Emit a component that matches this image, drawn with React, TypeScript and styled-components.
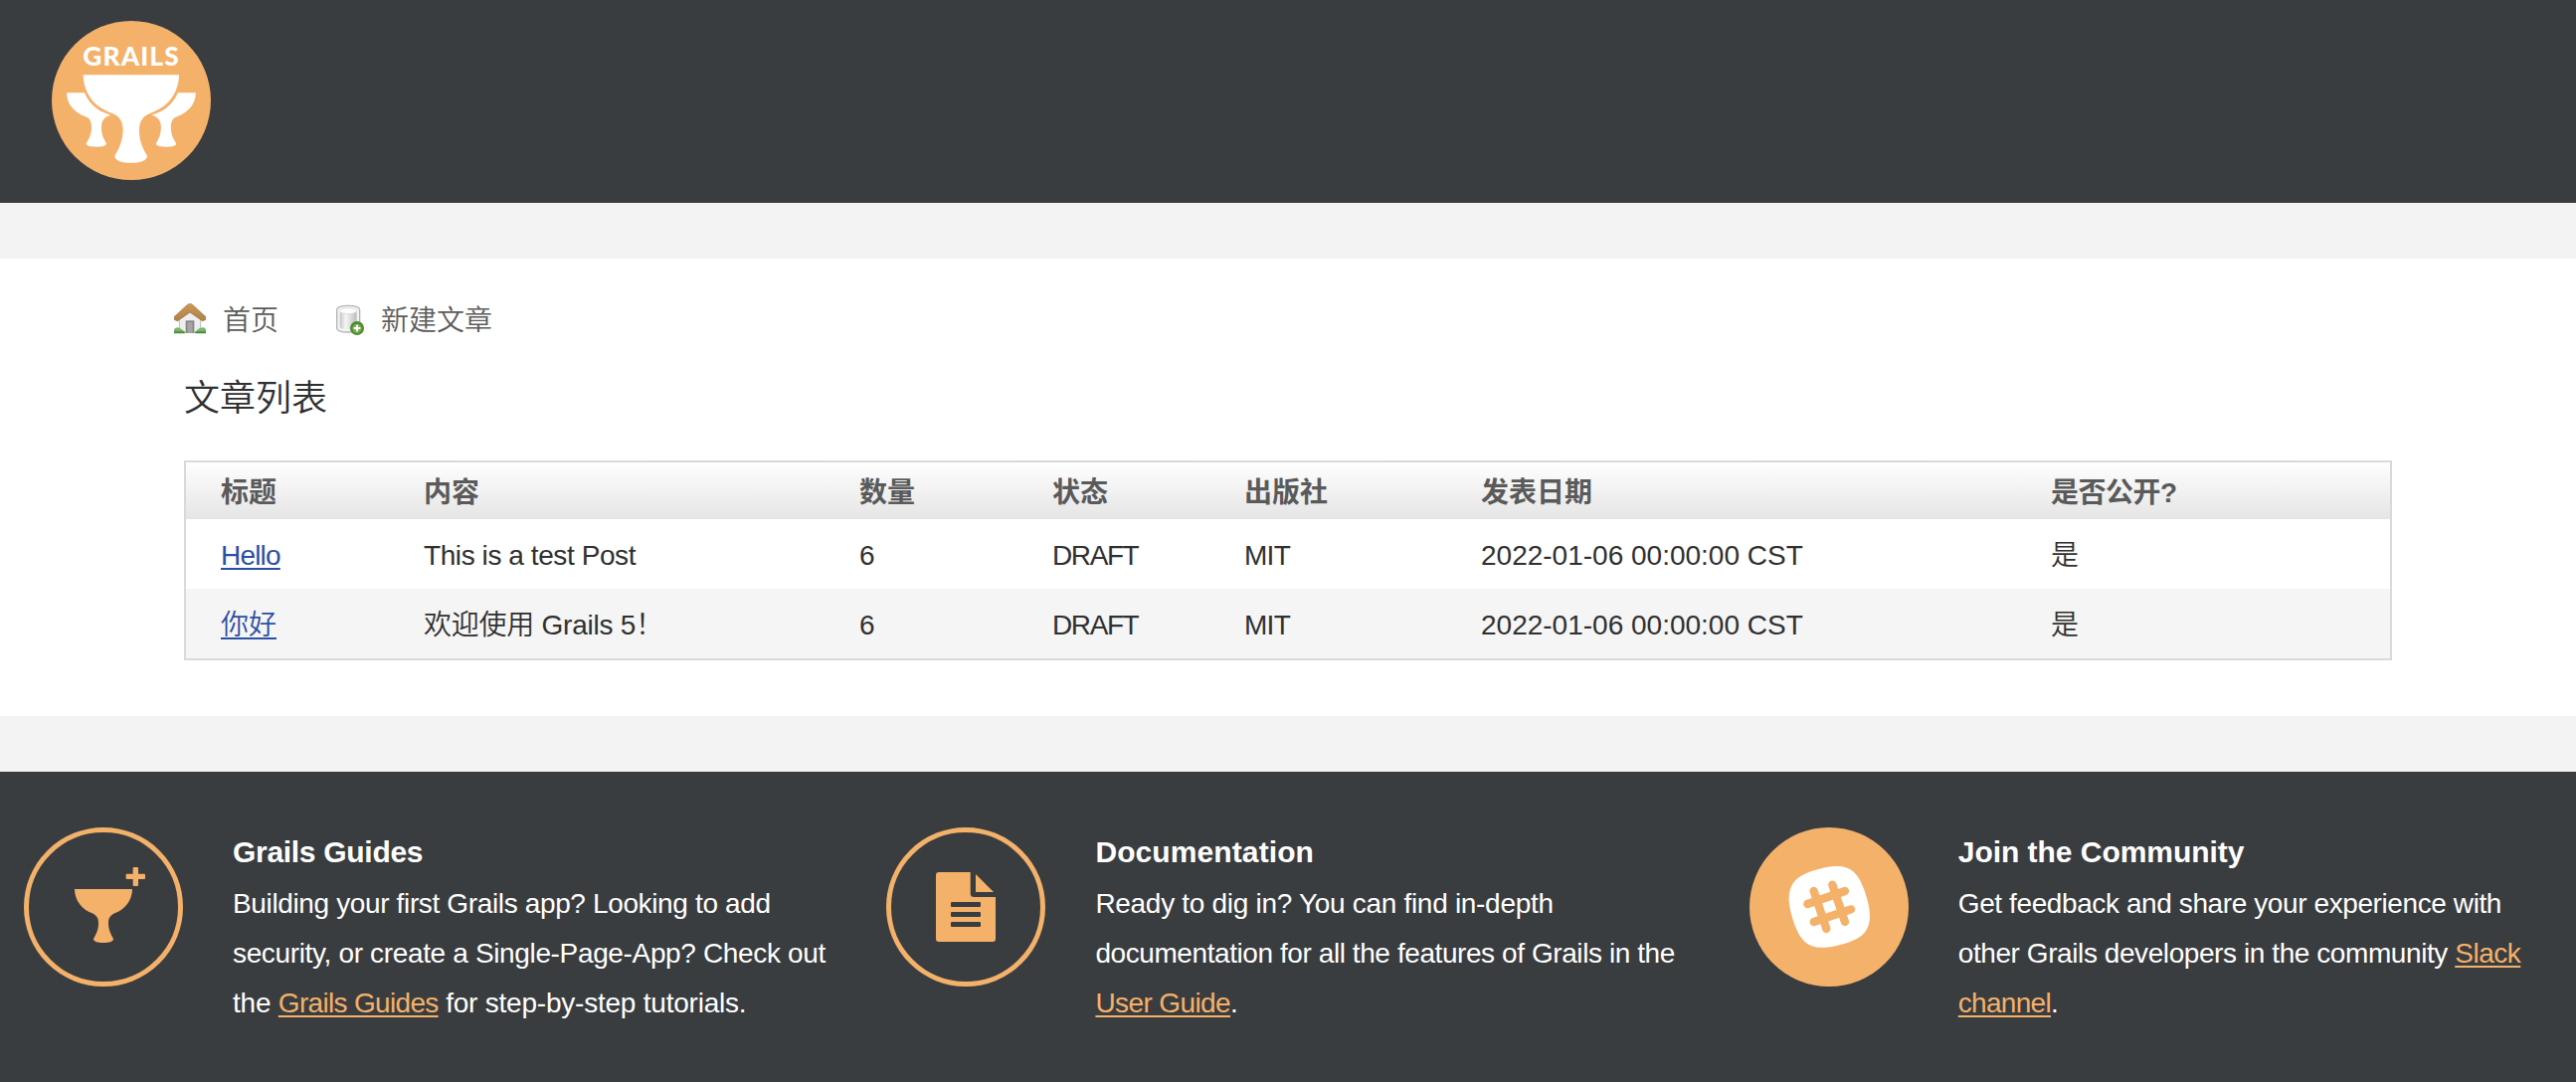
import React from "react";
import styled, { createGlobalStyle } from "styled-components";

const ORANGE = "#f4b16a";
const SLATE = "#3a3d40";

const GlobalStyle = createGlobalStyle`
  *, *::before, *::after { box-sizing: border-box; }
  body {
    margin: 0;
    background: #f3f3f3;
    color: #303030;
    font-family: "Liberation Sans", "Noto Sans CJK SC", sans-serif;
    font-size: 28px;
    font-weight: 350;
  }
  #root { min-height: 1088px; }
`;

const Page = styled.div`
  display: flex;
  flex-direction: column;
  gap: 56px;
  min-height: 1088px;
`;

const Header = styled.header`
  height: 204px;
  padding: 21px 52px;
  background: ${SLATE};
`;

const RoundIcon = styled.svg`
  display: block;
  flex: none;
  width: 160px;
  height: 160px;
`;

const LogoText = styled.text`
  font-family: Lato, "Liberation Sans", sans-serif;
  font-weight: 900;
  font-size: 79px;
  fill: #fff;
`;

const Content = styled.main`
  height: 460px;
  padding: 35px 185px 0;
  background: #fff;
`;

const Nav = styled.nav`
  display: flex;
  align-items: center;
  gap: 57px;
  height: 52px;
  margin-left: -10px;
`;

const NavLink = styled.a<{ $gap: number }>`
  display: flex;
  align-items: center;
  gap: ${(p) => p.$gap}px;
  height: 52px;
  line-height: 52px;
  color: #5c5c5c;
`;

const NavLabel = styled.span`
  padding-top: 3px;
`;

const NavIcon = styled.svg`
  display: block;
  width: 32px;
  height: 32px;
`;

const Title = styled.h1`
  margin: 29px 0 0;
  height: 87px;
  font-size: 36px;
  font-weight: 350;
  line-height: 50px;
`;

const Table = styled.section`
  border: 2px solid #d9d9d9;
`;

const Row = styled.div<{ $striped?: boolean }>`
  display: grid;
  grid-template-columns: 204px 438px 194px 193px 238px 573px 1fr;
  height: 70px;
  padding-left: 35px;
  line-height: 73px;
  background: ${(p) => (p.$striped ? "#f5f5f5" : "#fff")};
`;

const HeadRow = styled(Row)`
  height: 57px;
  line-height: 62px;
  font-weight: 700;
  color: #5a5a5a;
  background: linear-gradient(#fff, #f3f3f3 45%, #e5e5e5);
`;

const Cell = styled.div<{ $spacing?: number }>`
  white-space: nowrap;
  letter-spacing: ${(p) => p.$spacing ?? 0}px;
`;

const TableLink = styled.a<{ $spacing?: number }>`
  color: #2c4fa3;
  letter-spacing: ${(p) => p.$spacing ?? 0}px;
  text-decoration: underline;
  text-decoration-thickness: 2px;
  text-underline-offset: 3px;
  text-decoration-skip-ink: none;
`;

const Footer = styled.footer`
  display: grid;
  grid-template-columns: 867.4px 867.4px 1fr;
  flex: 1;
  padding: 56px 0 0 24px;
  color: #fff;
  background: ${SLATE};
`;

const Card = styled.section`
  display: flex;
  gap: 50px;
`;

const CardText = styled.div`
  line-height: 50px;
`;

const CardTitle = styled.h2<{ $spacing: number }>`
  margin: 0 0 2px;
  font-size: 30px;
  font-weight: 700;
  letter-spacing: ${(p) => p.$spacing}px;
`;

const Line = styled.span<{ $spacing: number }>`
  display: block;
  white-space: nowrap;
  letter-spacing: ${(p) => p.$spacing}px;
`;

const FooterLink = styled(TableLink)`
  color: ${ORANGE};
`;

const SideCup = ({ mirrored }: { mirrored?: boolean }) => (
  <path
    transform={mirrored ? "matrix(-1 0 0 1 551.5 0)" : undefined}
    d="M81 250H135C149 283 175 307 214 317C194 323 186 334 186 354C186 376 192 387 201 403C201 410 190 413 171 413C152 413 141 411 140 403C150 386 156 376 156 352C155 334 151 327 136 321C102 308 82 285 81 250Z"
  />
);

const GrailsLogo = () => (
  <RoundIcon viewBox="36 33 480 480">
    <circle cx="276" cy="273" r="240" fill={ORANGE} />
    <LogoText x="130" y="168" textLength="289" lengthAdjust="spacing">GRAILS</LogoText>
    <g fill="#fff">
      <path d="M131 196H420C419 252 386 294 334 311C311 320 301 334 300 362C300 396 310 416 324 440C324 456 300 461 275 461C250 461 226 456 226 440C240 416 250 396 251 362C250 334 240 320 217 311C165 294 132 252 131 196Z" />
      <SideCup />
      <SideCup mirrored />
    </g>
  </RoundIcon>
);

const GuidesIcon = () => (
  <RoundIcon viewBox="42 30 480 480" fill={ORANGE}>
    <circle cx="282" cy="270" r="232.5" fill="none" stroke={ORANGE} strokeWidth="15" />
    <path d="M195 216H369C369 252 345 278 316 289C303 295 297 303 297 319C297 338 303 349 312 366C312 375 298 378 282 378C266 378 252 375 252 366C262 349 267 338 267 319C267 303 261 295 248 289C219 278 195 252 195 216Z" />
    <rect x="371" y="150" width="16" height="57" rx="3" />
    <rect x="350" y="170" width="58" height="16" rx="3" />
  </RoundIcon>
);

const DocumentIcon = () => (
  <RoundIcon viewBox="0 0 160 160" fill={ORANGE}>
    <circle cx="80" cy="80" r="77.5" fill="none" stroke={ORANGE} strokeWidth="5" />
    <path
      fillRule="evenodd"
      d="M53 45H84.700V66.500Q84.700 70 88.200 70H110V112Q110 115 107 115H53Q50 115 50 112V48Q50 45 53 45ZM66 75Q65 75 65 76V79Q65 80 66 80H94Q95 80 95 79V76Q95 75 94 75ZM66 85Q65 85 65 86V89Q65 90 66 90H94Q95 90 95 89V86Q95 85 94 85ZM66 95Q65 95 65 96V99Q65 100 66 100H94Q95 100 95 99V96Q95 95 94 95Z"
    />
    <path d="M90 47L108 65H90Z" />
  </RoundIcon>
);

const SlackIcon = () => (
  <RoundIcon viewBox="27 30 480 480">
    <circle cx="267" cy="270" r="240" fill={ORANGE} />
    <path
      fill="#fff"
      d="M290 147C335 147 355 170 372 215C383 247 390 275 390 295C390 340 370 362 325 377C290 388 265 392 245 392C200 392 180 368 163 323C152 290 146 265 146 245C146 200 170 177 212 163C245 152 270 147 290 147Z"
    />
    <path
      d="M221 222L259 336M277 203L315 315M202 261L315 222M221 315L333 277"
      fill="none"
      stroke={ORANGE}
      strokeWidth="25"
      strokeLinecap="round"
    />
  </RoundIcon>
);

const HomeIcon = () => (
  <NavIcon viewBox="30 18 96 96">
    <defs>
      <linearGradient id="roof" x1="0" y1="0" x2="0" y2="1">
        <stop offset="0" stopColor="#c9975a" />
        <stop offset="1" stopColor="#b08048" />
      </linearGradient>
    </defs>
    <path d="M46 62L78 40L110 62V106H46Z" fill="#eeeeee" stroke="#bdbdbd" strokeWidth="3" />
    <path d="M30 108V96Q38 88 46 92Q57 96 63 108ZM93 108Q98 96 110 92Q122 88 126 96V108Z" fill="#78b566" />
    <path d="M30 109V103H62V109ZM94 109V103H126V109Z" fill="#4c8c3d" />
    <rect x="65" y="70" width="26" height="38" fill="#858585" />
    <rect x="70" y="75" width="16" height="33" fill="#a4a4a4" />
    <path d="M69 22Q78 14 87 22L126 58V68L117 72L78 45L39 72L30 68V58Z" fill="url(#roof)" />
    <path d="M39 72L78 45L117 72" fill="none" stroke="#a07038" strokeWidth="2.5" />
  </NavIcon>
);

const AddIcon = () => (
  <NavIcon viewBox="27 18 96 96">
    <defs>
      <linearGradient id="drum">
        <stop offset="0" stopColor="#c6c6c6" />
        <stop offset="0.35" stopColor="#f6f6f6" />
        <stop offset="1" stopColor="#bcbcbc" />
      </linearGradient>
    </defs>
    <path d="M32 38Q32 25 66 25Q101 25 101 38V92Q101 105 66 105Q32 105 32 92Z" fill="#f4f4f4" stroke="#b4b4b4" strokeWidth="4" />
    <path d="M41 42H92V90Q88 97 66 97Q45 97 41 90Z" fill="url(#drum)" />
    <ellipse cx="66" cy="41" rx="26" ry="9" fill="#fdfdfd" stroke="#d0d0d0" strokeWidth="2" />
    <circle cx="93" cy="93" r="21" fill="#4f8a2c" />
    <circle cx="93" cy="94" r="14" fill="#79ad51" />
    <path d="M93 83V103M83 93H103" stroke="#fff" strokeWidth="6" />
  </NavIcon>
);

const columns = ["标题", "内容", "数量", "状态", "出版社", "发表日期", "是否公开?"];

const posts = [
  { title: "Hello", titleSpacing: -0.8, body: "This is a test Post", bodySpacing: -0.42 },
  { title: "你好", titleSpacing: 0, body: "欢迎使用 Grails 5！", bodySpacing: -0.25 },
];

export default function App() {
  return (
    <>
      <GlobalStyle />
      <Page>
        <Header>
          <GrailsLogo />
        </Header>
        <Content>
          <Nav>
            <NavLink $gap={17}><HomeIcon /><NavLabel>首页</NavLabel></NavLink>
            <NavLink $gap={14}><AddIcon /><NavLabel>新建文章</NavLabel></NavLink>
          </Nav>
          <Title>文章列表</Title>
          <Table>
            <HeadRow>
              {columns.map((name) => (
                <Cell key={name} $spacing={name.endsWith("?") ? -0.5 : 0}>{name}</Cell>
              ))}
            </HeadRow>
            {posts.map((post, i) => (
              <Row key={post.title} $striped={i % 2 === 1}>
                <Cell><TableLink $spacing={post.titleSpacing}>{post.title}</TableLink></Cell>
                <Cell $spacing={post.bodySpacing}>{post.body}</Cell>
                <Cell>6</Cell>
                <Cell $spacing={-1.4}>DRAFT</Cell>
                <Cell $spacing={-0.7}>MIT</Cell>
                <Cell>2022-01-06 00:00:00 CST</Cell>
                <Cell>是</Cell>
              </Row>
            ))}
          </Table>
        </Content>
        <Footer>
          <Card>
            <GuidesIcon />
            <CardText>
              <CardTitle $spacing={-0.3}>Grails Guides</CardTitle>
              <Line $spacing={-0.36}>Building your first Grails app? Looking to add</Line>
              <Line $spacing={-0.35}>security, or create a Single-Page-App? Check out</Line>
              <Line $spacing={-0.22}>the <FooterLink $spacing={-0.68}>Grails Guides</FooterLink> for step-by-step tutorials.</Line>
            </CardText>
          </Card>
          <Card>
            <DocumentIcon />
            <CardText>
              <CardTitle $spacing={0.1}>Documentation</CardTitle>
              <Line $spacing={-0.3}>Ready to dig in? You can find in-depth</Line>
              <Line $spacing={-0.42}>documentation for all the features of Grails in the</Line>
              <Line $spacing={-0.4}><FooterLink $spacing={-0.6}>User Guide</FooterLink>.</Line>
            </CardText>
          </Card>
          <Card>
            <SlackIcon />
            <CardText>
              <CardTitle $spacing={-0.04}>Join the Community</CardTitle>
              <Line $spacing={-0.4}>Get feedback and share your experience with</Line>
              <Line $spacing={-0.42}>other Grails developers in the community <FooterLink $spacing={-0.5}>Slack</FooterLink></Line>
              <Line $spacing={-0.4}><FooterLink $spacing={-0.7}>channel</FooterLink>.</Line>
            </CardText>
          </Card>
        </Footer>
      </Page>
    </>
  );
}
